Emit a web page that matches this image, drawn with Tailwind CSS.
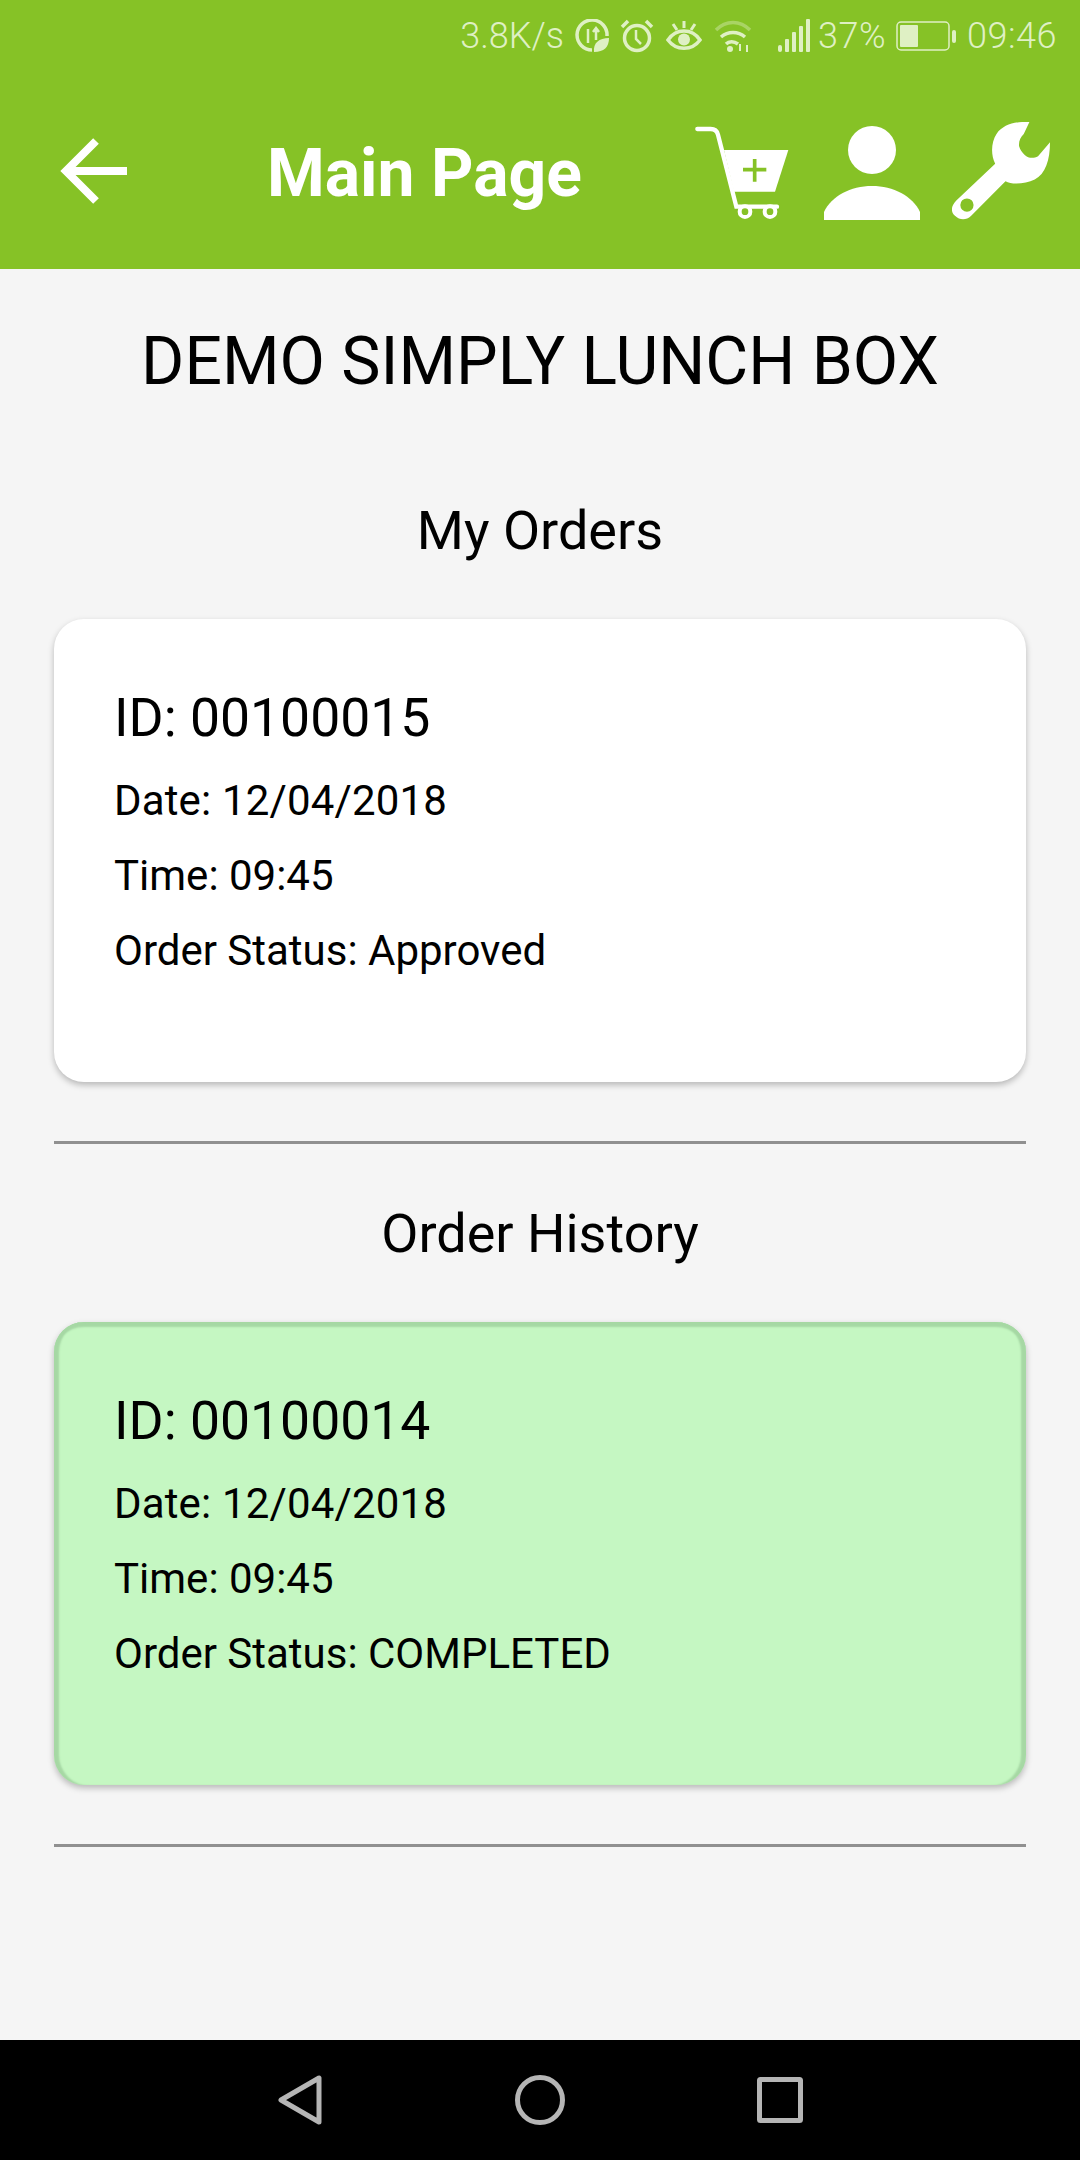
<!DOCTYPE html>
<html lang="en">
  <head>
    <meta charset="UTF-8" />
    <meta name="viewport" content="width=device-width, initial-scale=1.0" />
    <title>Main Page</title>
    <script src="https://cdn.jsdelivr.net/npm/@tailwindcss/browser@4"></script>
  </head>
  <body class="bg-[#f5f5f5] font-['Roboto',sans-serif]">
    <div class="w-[1080px] h-[2160px] flex flex-col overflow-hidden">
      <!-- header -->
      <header class="h-[269px] bg-[#86c226] shrink-0">
        <div class="h-[72px] flex items-center justify-end pr-[23px] text-[#dff0c4] text-[36px] font-light">
          <span>3.8K/s</span>
          <svg class="ml-[11px] w-[34px] h-[34px]" viewBox="0 0 34 34" fill="none" stroke="#dff0c4" stroke-width="3.5">
            <path d="M17 31A15 15 0 1 1 32 17" />
            <path d="M13 10v14M21 9v12M18 13l3-4 3 4" stroke-width="2.5" />
            <path d="M19 33c-1-9 5-14 15-14 0 9-5 14-15 14z" fill="#dff0c4" stroke="none" />
          </svg>
          <svg class="ml-[11px] w-[34px] h-[34px]" viewBox="0 0 34 34" fill="none" stroke="#dff0c4" stroke-width="3.5">
            <circle cx="17" cy="19" r="12.5" />
            <path d="M16 11v9l5 5" stroke-width="2.5" />
            <path d="M2 8l6-6M32 8l-6-6" />
          </svg>
          <svg class="ml-[12px] w-[36px] h-[34px]" viewBox="0 0 36 34" fill="none" stroke="#dff0c4" stroke-width="3.5">
            <path d="M2 21c8-12 24-12 32 0-8 11-24 11-32 0z" />
            <circle cx="18" cy="20.5" r="6" fill="#dff0c4" stroke="none" />
            <path d="M18 2v7M7 5l4 6M29 5l-4 6" stroke-width="3" />
          </svg>
          <svg class="ml-[12px] w-[38px] h-[34px]" viewBox="0 0 38 34" fill="none" stroke="#dff0c4" stroke-width="3.5">
            <path d="M2 11c10-10 24-10 34 0" opacity="0.4" />
            <path d="M7 18c7-6 17-6 24 0" />
            <path d="M12 25c3-3 8-3 12 0" />
            <circle cx="16" cy="30" r="3" fill="#dff0c4" stroke="none" />
            <path d="M26 32v-7M33 26v7" stroke-width="2" />
          </svg>
          <svg class="ml-[26px] w-[33px] h-[34px]" viewBox="0 0 33 34" fill="#dff0c4">
            <rect x="0" y="26" width="4" height="7" rx="2" />
            <rect x="7" y="20" width="4" height="13" rx="1" />
            <rect x="14" y="13" width="4" height="20" rx="1" />
            <rect x="21" y="7" width="4" height="26" rx="1" />
            <rect x="28" y="0" width="4" height="33" rx="1" />
          </svg>
          <span class="ml-[7px] tracking-[0.5px]">37%</span>
          <svg class="ml-[10px] w-[60px] h-[30px]" viewBox="0 0 60 30" fill="none">
            <rect x="1" y="1" width="52" height="28" rx="4" stroke="#dff0c4" stroke-width="1.5" />
            <rect x="4" y="4" width="18" height="22" rx="1" fill="#dff0c4" />
            <rect x="56" y="9" width="4" height="13" rx="2" fill="#dff0c4" />
          </svg>
          <span class="ml-[11px] tracking-[0.5px]">09:46</span>
        </div>
        <div class="h-[197px] flex items-center pl-[60px] pr-[30px]">
          <svg class="w-[67px] h-[66px]" viewBox="0 0 67 66" fill="none" stroke="#fff" stroke-width="8">
            <path d="M36 3L6 33l30 30M6 33h61" />
          </svg>
          <h1 class="ml-[140px] text-white text-[66px] font-bold mt-[6px]">Main Page</h1>
          <div class="ml-auto flex items-end gap-[32px]">
            <svg class="w-[95px] h-[95px] mr-[3px]" viewBox="75 75 285 285" fill="none" stroke="#fff">
              <path d="M85 87h40c12 0 19 5 22 17l55 216h122" stroke-width="13" stroke-linecap="round" />
              <path d="M165 150h193l-40 125H195z" fill="#fff" stroke="none" />
              <path d="M222 209h70M257 177v68" stroke="#86c226" stroke-width="11" />
              <circle cx="228" cy="335" r="16" stroke-width="12" fill="#86c226" />
              <circle cx="303" cy="335" r="16" stroke-width="12" fill="#86c226" />
            </svg>
            <svg class="w-[96px] h-[94px]" viewBox="462 75 288 282" fill="#fff">
              <circle cx="606" cy="147" r="72" />
              <path d="M462 357v-24c22-48 80-78 144-78s122 30 144 78v24z" />
            </svg>
            <svg class="w-[98px] h-[98px]" viewBox="845 62 295 295">
              <path fill="#fff" d="M1078 62c-40-2-78 6-99 36-16 24-18 62-4 90L858 298c-17 17-17 36-4 46 14 14 34 14 48 1l104-105c20 12 60 8 88-5 32-16 46-58 46-112l-36 42c-14 8-30 6-40-4-8-7-14-16-17-26-2-14 4-28 14-37z" />
              <circle cx="890" cy="312" r="20" fill="#86c226" />
            </svg>
          </div>
        </div>
      </header>

      <!-- content -->
      <main class="flex-1 px-[54px] text-black">
        <h2 class="mt-[55px] text-center text-[66px] leading-[76px]">DEMO SIMPLY LUNCH BOX</h2>

        <h3 class="mt-[101px] text-center text-[54px] leading-[60px]">My Orders</h3>
        <div class="mt-[58px] h-[463px] bg-white rounded-[30px] pl-[60px] pt-[69px] shadow-[0_3px_6px_rgba(0,0,0,0.25)]">
          <p class="text-[53.5px] leading-[60px] mb-[15px]">ID: 00100015</p>
          <p class="text-[42px] leading-[75px] tracking-[0.15px]">Date: 12/04/2018</p>
          <p class="text-[42px] leading-[75px]">Time: 09:45</p>
          <p class="text-[42px] leading-[75px]">Order Status: Approved</p>
        </div>
        <div class="mt-[59px] h-[3px] bg-[#909090]"></div>

        <h3 class="mt-[60px] text-center text-[54px] leading-[60px]">Order History</h3>
        <div class="mt-[58px] h-[463px] bg-[#c5f7c2] rounded-[30px] pl-[60px] pt-[69px] shadow-[0_3px_6px_rgba(0,0,0,0.25),inset_6px_0_2px_-1px_#a6d8a4,inset_-6px_0_2px_-1px_#a6d8a4,inset_0_6px_2px_-1px_#a6d8a4]">
          <p class="text-[53.5px] leading-[60px] mb-[15px]">ID: 00100014</p>
          <p class="text-[42px] leading-[75px] tracking-[0.15px]">Date: 12/04/2018</p>
          <p class="text-[42px] leading-[75px]">Time: 09:45</p>
          <p class="text-[42px] leading-[75px]">Order Status: COMPLETED</p>
        </div>
        <div class="mt-[59px] h-[3px] bg-[#909090]"></div>
      </main>

      <!-- android nav -->
      <nav class="h-[120px] bg-black shrink-0 relative flex items-center">
        <svg class="ml-[278px] w-[44px] h-[50px]" viewBox="0 0 44 50" fill="none" stroke="#b5b5b5" stroke-width="5" stroke-linejoin="round">
          <path d="M41 3v44L3 25z" />
        </svg>
        <svg class="ml-[193px] w-[50px] h-[50px]" viewBox="0 0 50 50" fill="none" stroke="#b5b5b5" stroke-width="5">
          <circle cx="25" cy="25" r="22.5" />
        </svg>
        <svg class="ml-[192px] w-[46px] h-[46px]" viewBox="0 0 46 46" fill="none" stroke="#b5b5b5" stroke-width="5" stroke-linejoin="round">
          <rect x="2.5" y="2.5" width="41" height="41" rx="1" />
        </svg>
      </nav>
    </div>
  </body>
</html>
